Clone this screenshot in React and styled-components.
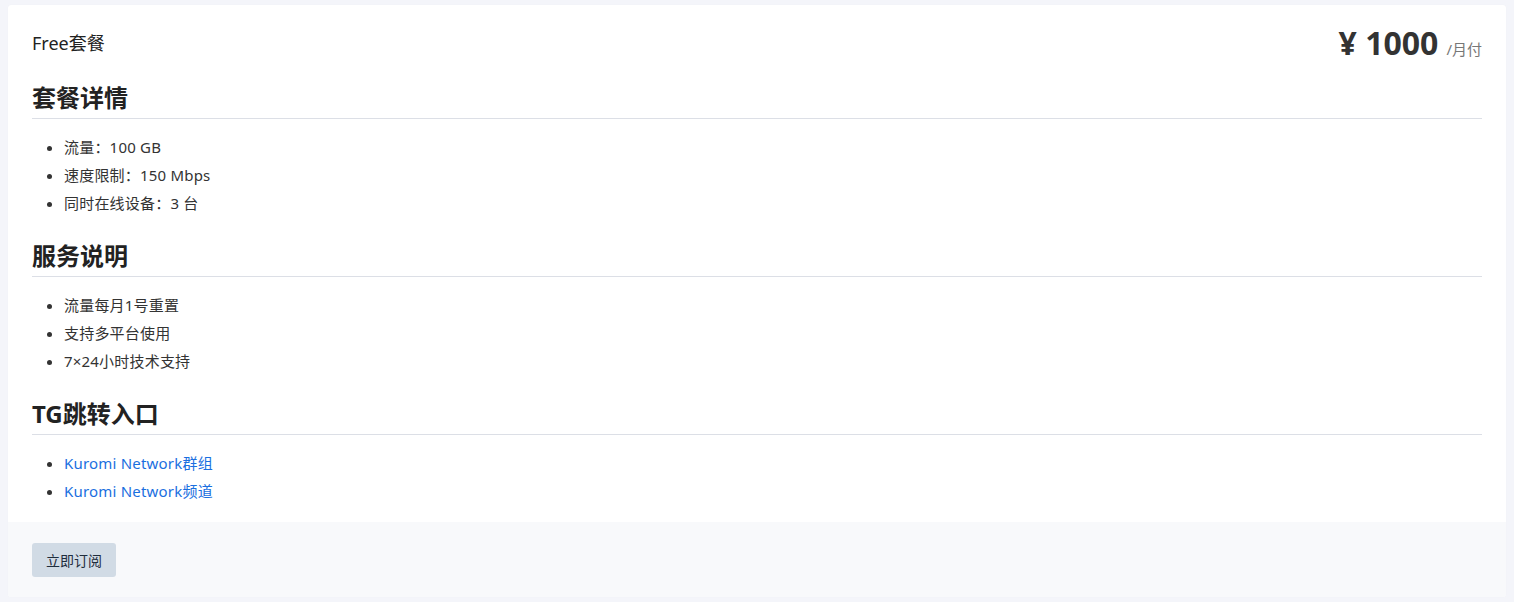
import React from 'react'
import styled, { createGlobalStyle } from 'styled-components'

const GlobalStyle = createGlobalStyle`
  body {
    margin: 0;
    background-color: #f4f5fa;
    font-family: "Noto Sans", "Noto Sans CJK SC", sans-serif;
    color: #333;
  }
`

const Page = styled.div`
  padding: 5px 8px 5px 8px;
`

const Card = styled.div`
  background-color: #fff;
  border-radius: 3px;
  overflow: hidden;
  box-shadow: 0 0 1px rgba(0, 0, 0, 0.05);
`

const Body = styled.div`
  padding: 18px 24px 17px 24px;
`

const Header = styled.div`
  display: flex;
  justify-content: space-between;
  align-items: center;
  height: 38px;
  margin-bottom: 22px;
`

const PlanName = styled.div`
  font-size: 18px;
  color: #222;
`

const Price = styled.div`
  display: flex;
  align-items: baseline;
  gap: 8px;
  color: #333;
`

const Amount = styled.span`
  font-size: 32px;
  font-weight: 700;
`

const Period = styled.span`
  font-size: 15px;
  color: #777;
`

const Section = styled.div`
  margin-bottom: 24px;
  &:last-child {
    margin-bottom: 0;
  }
`

const Heading = styled.h3`
  margin: 0;
  font-size: 24px;
  line-height: 29px;
  font-weight: 700;
  color: #222;
  padding-bottom: 6px;
  border-bottom: 1px solid #dcdfe6;
`

const List = styled.ul`
  margin: 14px 0 0 0;
  padding-left: 32px;
  font-size: 15px;
  line-height: 28px;
  color: #333;
  letter-spacing: 0.2px;
`

const Link = styled.a`
  color: #1a6fe0;
  text-decoration: none;
  font-size: 15px;
`

const Footer = styled.div`
  background-color: #f8f9fb;
  padding: 21px 24px 20px 24px;
`

const Button = styled.button`
  height: 34px;
  padding: 0 14px;
  border: none;
  border-radius: 3px;
  background-color: #d1dbe5;
  color: #1f2d3d;
  font-family: inherit;
  font-size: 14px;
  cursor: pointer;
`

const sections = [
  { title: '套餐详情', items: ['流量：100 GB', '速度限制：150 Mbps', '同时在线设备：3 台'] },
  { title: '服务说明', items: ['流量每月1号重置', '支持多平台使用', '7×24小时技术支持'] },
]

const links = ['Kuromi Network群组', 'Kuromi Network频道']

export default function App() {
  return (
    <>
      <GlobalStyle />
      <Page>
        <Card>
          <Body>
            <Header>
              <PlanName>Free套餐</PlanName>
              <Price>
                <Amount>¥ 1000</Amount>
                <Period>/月付</Period>
              </Price>
            </Header>
            {sections.map((s) => (
              <Section key={s.title}>
                <Heading>{s.title}</Heading>
                <List>
                  {s.items.map((i) => <li key={i}>{i}</li>)}
                </List>
              </Section>
            ))}
            <Section>
              <Heading>TG跳转入口</Heading>
              <List>
                {links.map((l) => (
                  <li key={l}><Link href="#">{l}</Link></li>
                ))}
              </List>
            </Section>
          </Body>
          <Footer>
            <Button>立即订阅</Button>
          </Footer>
        </Card>
      </Page>
    </>
  )
}
